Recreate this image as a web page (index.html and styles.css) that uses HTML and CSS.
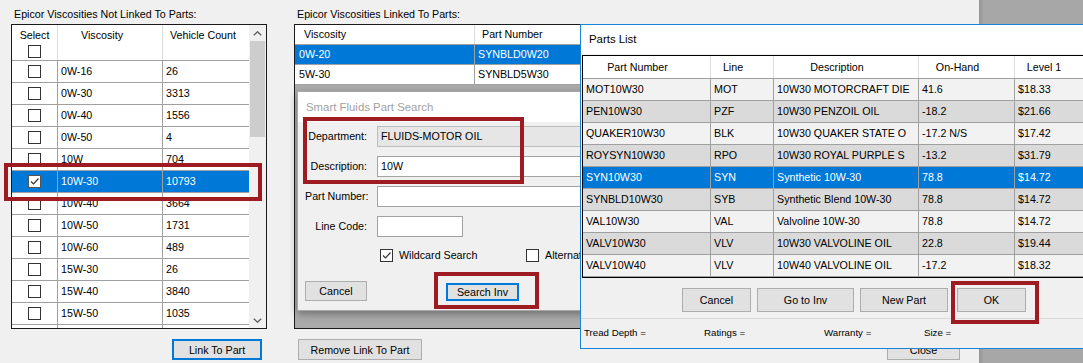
FILE: index.html
```html
<!DOCTYPE html>
<html lang="en">
<head>
<meta charset="utf-8">
<title>Epicor Viscosities</title>
<link rel="stylesheet" href="styles.css">
</head>
<body>
<div class="screen">
  <div class="mainwin">
    <section class="panel panel-left">
      <div class="caption">Epicor Viscosities Not Linked To Parts:</div>
      <div class="grid-l">
        <div class="gl-body">
          <div class="gl-head">
            <div class="hc hc-select"><span>Select</span><span class="cb"></span></div>
            <div class="hc hc-visc">Viscosity</div>
            <div class="hc hc-count">Vehicle Count</div>
          </div>
          <div class="gl-row"><div class="c c-cb"><span class="cb"></span></div><div class="c">0W-16</div><div class="c">26</div></div>
          <div class="gl-row"><div class="c c-cb"><span class="cb"></span></div><div class="c">0W-30</div><div class="c">3313</div></div>
          <div class="gl-row"><div class="c c-cb"><span class="cb"></span></div><div class="c">0W-40</div><div class="c">1556</div></div>
          <div class="gl-row"><div class="c c-cb"><span class="cb"></span></div><div class="c">0W-50</div><div class="c">4</div></div>
          <div class="gl-row"><div class="c c-cb"><span class="cb"></span></div><div class="c">10W</div><div class="c">704</div></div>
          <div class="gl-row sel"><div class="c c-cb"><span class="cb checked"><svg viewBox="0 0 11 11" width="11" height="11"><path d="M2 5.5 L4.5 8 L9.5 2.5" fill="none" stroke="#333" stroke-width="1.2"/></svg></span></div><div class="c">10W-30</div><div class="c">10793</div></div>
          <div class="gl-row"><div class="c c-cb"><span class="cb"></span></div><div class="c">10W-40</div><div class="c">3664</div></div>
          <div class="gl-row"><div class="c c-cb"><span class="cb"></span></div><div class="c">10W-50</div><div class="c">1731</div></div>
          <div class="gl-row"><div class="c c-cb"><span class="cb"></span></div><div class="c">10W-60</div><div class="c">489</div></div>
          <div class="gl-row"><div class="c c-cb"><span class="cb"></span></div><div class="c">15W-30</div><div class="c">26</div></div>
          <div class="gl-row"><div class="c c-cb"><span class="cb"></span></div><div class="c">15W-40</div><div class="c">3840</div></div>
          <div class="gl-row"><div class="c c-cb"><span class="cb"></span></div><div class="c">15W-50</div><div class="c">1035</div></div>
          <div class="gl-row"><div class="c c-cb"></div><div class="c"></div><div class="c"></div></div>
        </div>
        <div class="vscroll">
          <div class="sb-arrow"><svg viewBox="0 0 9 5" width="9" height="5"><path d="M0.8 4.3 L4.5 0.8 L8.2 4.3" fill="none" stroke="#606060" stroke-width="1.4"/></svg></div>
          <div class="sb-thumb"></div>
          <div class="sb-space"></div>
          <div class="sb-arrow"><svg viewBox="0 0 9 5" width="9" height="5"><path d="M0.8 0.7 L4.5 4.2 L8.2 0.7" fill="none" stroke="#606060" stroke-width="1.4"/></svg></div>
        </div>
      </div>
      <div class="btnrow btnrow-left">
        <button class="btn focus btn-link">Link To Part</button>
      </div>
    </section>

    <section class="panel panel-mid">
      <div class="caption">Epicor Viscosities Linked To Parts:</div>
      <div class="grid-m">
        <div class="gm-row gm-head"><div class="c">Viscosity</div><div class="c">Part Number</div></div>
        <div class="gm-row sel"><div class="c">0W-20</div><div class="c">SYNBLD0W20</div></div>
        <div class="gm-row"><div class="c">5W-30</div><div class="c">SYNBLD5W30</div></div>
      </div>
      <div class="btnrow btnrow-mid">
        <button class="btn btn-remove">Remove Link To Part</button>
        <button class="btn btn-close">Close</button>
      </div>
    </section>

    <div class="mark mark-row"></div>
  </div>
  <div class="desktop"></div>

  <div class="dlg dlg-search">
    <div class="dlg-title inactive">Smart Fluids Part Search</div>
    <div class="form">
      <label class="lbl">Department:</label><div class="inp ro">FLUIDS-MOTOR OIL</div>
      <label class="lbl">Description:</label><div class="inp">10W</div>
      <label class="lbl">Part Number:</label><div class="inp"></div>
      <label class="lbl">Line Code:</label><div class="inp short"></div>
    </div>
    <div class="checks">
      <div class="chk chk-wild"><span class="cb checked light"><svg viewBox="0 0 11 11" width="11" height="11"><path d="M2 5.5 L4.5 8 L9.5 2.5" fill="none" stroke="#333" stroke-width="1.2"/></svg></span><span>Wildcard Search</span></div>
      <div class="chk"><span class="cb"></span><span>Alternate Search</span></div>
    </div>
    <div class="dlg-buttons">
      <button class="btn btn-cancel-s">Cancel</button>
      <button class="btn focus btn-search">Search Inv</button>
    </div>
    <div class="mark mark-dept"></div>
    <div class="mark mark-search"></div>
  </div>

  <div class="dlg dlg-parts">
    <div class="dlg-title">Parts List</div>
    <div class="pgrid">
      <div class="pg-row pg-head"><div class="c">Part Number</div><div class="c">Line</div><div class="c">Description</div><div class="c">On-Hand</div><div class="c">Level 1</div></div>
      <div class="pg-row"><div class="c">MOT10W30</div><div class="c">MOT</div><div class="c">10W30 MOTORCRAFT DIE</div><div class="c">41.6</div><div class="c">$18.33</div></div>
      <div class="pg-row alt"><div class="c">PEN10W30</div><div class="c">PZF</div><div class="c">10W30 PENZOIL OIL</div><div class="c">-18.2</div><div class="c">$21.66</div></div>
      <div class="pg-row"><div class="c">QUAKER10W30</div><div class="c">BLK</div><div class="c">10W30 QUAKER STATE O</div><div class="c">-17.2 N/S</div><div class="c">$17.42</div></div>
      <div class="pg-row alt"><div class="c">ROYSYN10W30</div><div class="c">RPO</div><div class="c">10W30 ROYAL PURPLE S</div><div class="c">-13.2</div><div class="c">$31.79</div></div>
      <div class="pg-row sel"><div class="c">SYN10W30</div><div class="c">SYN</div><div class="c">Synthetic 10W-30</div><div class="c">78.8</div><div class="c">$14.72</div></div>
      <div class="pg-row alt"><div class="c">SYNBLD10W30</div><div class="c">SYB</div><div class="c">Synthetic Blend 10W-30</div><div class="c">78.8</div><div class="c">$14.72</div></div>
      <div class="pg-row"><div class="c">VAL10W30</div><div class="c">VAL</div><div class="c">Valvoline 10W-30</div><div class="c">78.8</div><div class="c">$14.72</div></div>
      <div class="pg-row alt"><div class="c">VALV10W30</div><div class="c">VLV</div><div class="c">10W30 VALVOLINE OIL</div><div class="c">22.8</div><div class="c">$19.44</div></div>
      <div class="pg-row"><div class="c">VALV10W40</div><div class="c">VLV</div><div class="c">10W40 VALVOLINE OIL</div><div class="c">-17.2</div><div class="c">$18.32</div></div>
    </div>
    <div class="pl-buttons">
      <button class="btn btn-pcancel">Cancel</button>
      <button class="btn btn-goto">Go to Inv</button>
      <button class="btn btn-new">New Part</button>
      <button class="btn btn-ok">OK</button>
    </div>
    <div class="pl-info">
      <span class="info i1">Tread Depth =</span>
      <span class="info i2">Ratings =</span>
      <span class="info i3">Warranty =</span>
      <span class="info i4">Size =</span>
    </div>
    <div class="mark mark-ok"></div>
  </div>
</div>
</body>
</html>
```

FILE: styles.css
```css
* { box-sizing: border-box; }
html, body { margin: 0; padding: 0; }
body {
  width: 1083px;
  height: 363px;
  overflow: hidden;
  background: #a6a6a6;
  font-family: "Liberation Sans", Arial, sans-serif;
  font-size: 10.7px;
  color: #000;
}
.screen {
  position: relative;
  width: 1083px;
  height: 363px;
  display: flex;
  overflow: hidden;
}
.mainwin {
  position: relative;
  flex: none;
  width: 979px;
  height: 363px;
  background: #f0f0f0;
  display: flex;
}
.desktop {
  flex: 1;
  background: linear-gradient(to right, #949494, #a7a7a7 5px, #a7a7a7);
}
.panel {
  display: flex;
  flex-direction: column;
  position: relative;
}
.caption {
  height: 24px;
  padding: 6px 0 0 3px;
  line-height: 16px;
  white-space: nowrap;
}

/* ---------- left grid ---------- */
.panel-left { margin-left: 11px; width: 256px; }
.grid-l {
  height: 305px;
  border: 1px solid #1a1a1a;
  background: #fff;
  display: flex;
  overflow: hidden;
}
.gl-body { width: 237px; overflow: hidden; }
.gl-head, .gl-row {
  display: grid;
  grid-template-columns: 46px 105px 86px;
}
.gl-head {
  height: 36px;
  border-bottom: 1px solid #a0a0a0;
  line-height: 16px;
}
.hc { padding-top: 2px; white-space: nowrap; }
.hc-select {
  border-right: 1px solid #dcdcdc;
  display: flex;
  flex-direction: column;
  align-items: center;
}
.hc-select .cb { margin-top: 2px; }
.hc-visc { border-right: 1px solid #dcdcdc; padding-left: 23px; }
.hc-count { padding-left: 7px; }
.gl-row {
  height: 22px;
  border-bottom: 1px solid #a0a0a0;
  line-height: 21px;
}
.gl-row .c { padding-left: 3px; white-space: nowrap; }
.gl-row .c:nth-child(1), .gl-row .c:nth-child(2) { border-right: 1px solid #a0a0a0; }
.gl-row .c-cb {
  padding-left: 0;
  display: flex;
  align-items: center;
  justify-content: center;
}
.sel { background: #0078d7; color: #fff; }

.cb {
  display: inline-flex;
  align-items: center;
  justify-content: center;
  width: 13px;
  height: 13px;
  border: 1px solid #333;
  background: #fff;
  flex: none;
}
.cb.checked { border-color: #555; }
.cb.light { border-color: #333; }

.vscroll {
  width: 17px;
  background: #f0f0f0;
  display: flex;
  flex-direction: column;
  align-items: center;
}
.sb-arrow {
  height: 16px;
  width: 17px;
  display: flex;
  align-items: center;
  justify-content: center;
}
.sb-thumb { width: 15px; height: 96px; background: #cdcdcd; }
.sb-space { flex: 1; }

.btnrow { display: flex; padding-top: 10px; }
.btnrow-left { justify-content: flex-end; padding-right: 5px; }
.btn {
  font-family: inherit;
  font-size: 10.7px;
  color: #000;
  height: 21px;
  padding: 0;
  margin: 0;
  background: #e1e1e1;
  border: 1px solid #adadad;
  display: flex;
  align-items: center;
  justify-content: center;
  white-space: nowrap;
}
.btn.focus { border: 2px solid #0078d7; }
.btn-link { width: 90px; }

/* ---------- middle grid ---------- */
.panel-mid { margin-left: 27px; width: 670px; }
.grid-m {
  height: 305px;
  border: 1px solid #1a1a1a;
  background: #ababab;
  overflow: hidden;
}
.gm-row {
  display: grid;
  grid-template-columns: 180px 180px;
  width: 360px;
  height: 20px;
  line-height: 19px;
  border-bottom: 1px solid #a0a0a0;
  background: #fff;
}
.gm-row .c { border-right: 1px solid #a0a0a0; white-space: nowrap; }
.gm-row .c:nth-child(1) { padding-left: 4px; }
.gm-row .c:nth-child(2) { padding-left: 3px; }
.gm-row.sel { background: #0078d7; color: #fff; }
.gm-head .c { border-right-color: #dcdcdc; }
.gm-head .c:nth-child(1) { padding-left: 9px; }
.gm-head .c:nth-child(2) { padding-left: 7px; }
.btnrow-mid { justify-content: space-between; padding-left: 4px; padding-right: 4px; }
.btn-remove { width: 124px; }
.btn-close { width: 73px; }

/* ---------- annotations ---------- */
.mark {
  position: absolute;
  border: 4px solid #9e1b22;
  pointer-events: none;
}
.mark-row { left: 4px; top: 163px; width: 258px; height: 38px; }

/* ---------- dialogs ---------- */
.dlg { position: absolute; overflow: hidden; background: #f0f0f0; }
.dlg-title {
  background: #fff;
  white-space: nowrap;
  font-size: 11.4px;
}
.dlg-title.inactive { color: #a0a0a0; }

.dlg-search {
  left: 297px;
  top: 91px;
  width: 330px;
  height: 220px;
  border: 1px solid #a8a8a8;
  box-shadow: 0 3px 8px rgba(0, 0, 0, 0.35);
  overflow: visible;
}
.dlg-search .dlg-title {
  height: 30px;
  line-height: 30px;
  padding-left: 8px;
}
.form {
  display: grid;
  grid-template-columns: 62px 1fr;
  column-gap: 10px;
  row-gap: 9px;
  padding: 4px 0 0 7px;
}
.lbl {
  text-align: right;
  line-height: 21px;
  white-space: nowrap;
}
.inp {
  height: 21px;
  width: 240px;
  border: 1px solid #a2a2a2;
  background: #fff;
  line-height: 19px;
  padding-left: 3px;
  white-space: nowrap;
}
.inp.ro { background: #e6e6e6; border-color: #bcbcbc; }
.inp.short { width: 86px; }
.checks {
  display: flex;
  margin-top: 12px;
  padding-left: 82px;
  height: 13px;
}
.chk {
  display: flex;
  align-items: center;
  gap: 6px;
  white-space: nowrap;
  line-height: 13px;
}
.chk-wild { width: 146px; }
.dlg-buttons {
  display: flex;
  align-items: flex-start;
  margin-top: 19px;
  padding-left: 7px;
}
.btn-cancel-s { width: 62px; height: 20px; }
.btn-search { width: 73px; height: 18px; margin-left: 79px; margin-top: 2px; }
.mark-dept { left: 5px; top: 25px; width: 221px; height: 67px; }
.mark-search { left: 136px; top: 180px; width: 105px; height: 37px; }

.dlg-parts {
  left: 580px;
  top: 24px;
  width: 530px;
  height: 325px;
  border: 1px solid #1883d7;
  border-right: none;
}
.dlg-parts .dlg-title {
  height: 29px;
  line-height: 29px;
  padding-left: 8px;
}
.pgrid {
  margin: 1px 0 0 1px;
  border: 1px solid #000;
  border-right: none;
  width: 540px;
}
.pg-row {
  display: grid;
  grid-template-columns: 128px 63px 145px 96px 77px;
  height: 22px;
  line-height: 21px;
  border-bottom: 1px solid #a0a0a0;
  background: #f2f2f2;
}
.pg-row.alt { background: #dadada; }
.pg-row.sel { background: #0078d7; color: #fff; }
.pg-row .c {
  border-right: 1px solid #a0a0a0;
  padding-left: 3px;
  white-space: nowrap;
  overflow: hidden;
}
.pg-head {
  height: 23px;
  line-height: 22px;
  background: #fff;
}
.pg-head .c {
  border-right-color: #dedede;
  text-align: center;
  padding-left: 0;
  padding-right: 18px;
}
.pl-buttons {
  display: flex;
  margin-top: 10px;
  padding-left: 101px;
  height: 24px;
}
.pl-buttons .btn { height: 24px; }
.btn-pcancel { width: 69px; }
.btn-goto { width: 97px; margin-left: 6px; }
.btn-new { width: 88px; margin-left: 6px; }
.btn-ok { width: 69px; margin-left: 9px; }
.pl-info {
  margin-top: 6px;
  border-top: 1px solid #d9d9d9;
  height: 29px;
  line-height: 28px;
  padding-left: 3px;
  display: flex;
  font-size: 9.7px;
  white-space: nowrap;
}
.i1, .i2 { width: 120px; }
.i3 { width: 100px; }
.mark-ok { left: 370px; top: 256px; width: 88px; height: 43px; }
```
